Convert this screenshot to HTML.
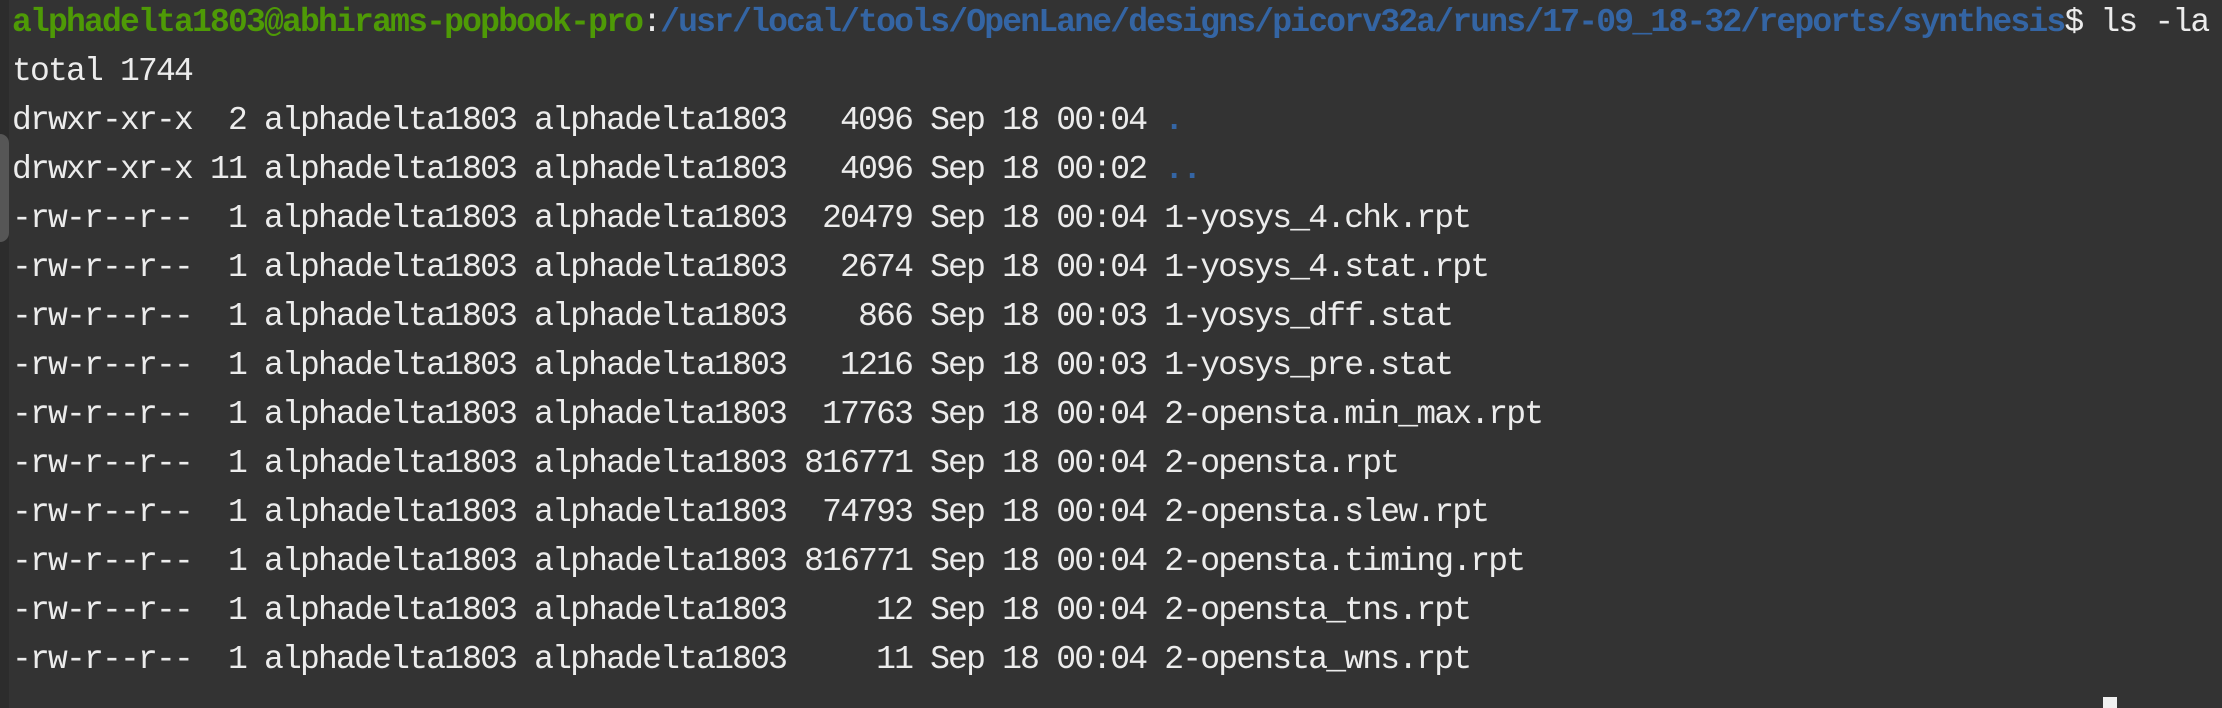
<!DOCTYPE html>
<html><head><meta charset="utf-8"><style>
html,body{margin:0;padding:0;background:#333333;width:2222px;height:708px;overflow:hidden}
.strip{position:absolute;left:0;top:0;width:9px;height:708px;background:#2c2c2c}
.thumb{position:absolute;left:0;top:134px;width:9px;height:108px;background:#565656;border-radius:0 12px 12px 0}
pre{position:absolute;left:12px;top:-2px;margin:0;font-family:"Liberation Mono","DejaVu Sans Mono",monospace;font-size:33px;letter-spacing:-1.8px;line-height:49px;color:#ececec;white-space:pre}
.g{color:#4e9a06;font-weight:bold}.b{color:#3465a4;font-weight:bold}
.cur{position:absolute;left:2103px;top:697px;width:14px;height:11px;background:#f0f0f0}
</style></head><body>
<div class="strip"></div><div class="thumb"></div>
<pre><span class="g">alphadelta1803@abhirams-popbook-pro</span>:<span class="b">/usr/local/tools/OpenLane/designs/picorv32a/runs/17-09_18-32/reports/synthesis</span>$ ls -la
total 1744
drwxr-xr-x  2 alphadelta1803 alphadelta1803   4096 Sep 18 00:04 <span class="b">.</span>
drwxr-xr-x 11 alphadelta1803 alphadelta1803   4096 Sep 18 00:02 <span class="b">..</span>
-rw-r--r--  1 alphadelta1803 alphadelta1803  20479 Sep 18 00:04 1-yosys_4.chk.rpt
-rw-r--r--  1 alphadelta1803 alphadelta1803   2674 Sep 18 00:04 1-yosys_4.stat.rpt
-rw-r--r--  1 alphadelta1803 alphadelta1803    866 Sep 18 00:03 1-yosys_dff.stat
-rw-r--r--  1 alphadelta1803 alphadelta1803   1216 Sep 18 00:03 1-yosys_pre.stat
-rw-r--r--  1 alphadelta1803 alphadelta1803  17763 Sep 18 00:04 2-opensta.min_max.rpt
-rw-r--r--  1 alphadelta1803 alphadelta1803 816771 Sep 18 00:04 2-opensta.rpt
-rw-r--r--  1 alphadelta1803 alphadelta1803  74793 Sep 18 00:04 2-opensta.slew.rpt
-rw-r--r--  1 alphadelta1803 alphadelta1803 816771 Sep 18 00:04 2-opensta.timing.rpt
-rw-r--r--  1 alphadelta1803 alphadelta1803     12 Sep 18 00:04 2-opensta_tns.rpt
-rw-r--r--  1 alphadelta1803 alphadelta1803     11 Sep 18 00:04 2-opensta_wns.rpt</pre>
<div class="cur"></div>
</body></html>
